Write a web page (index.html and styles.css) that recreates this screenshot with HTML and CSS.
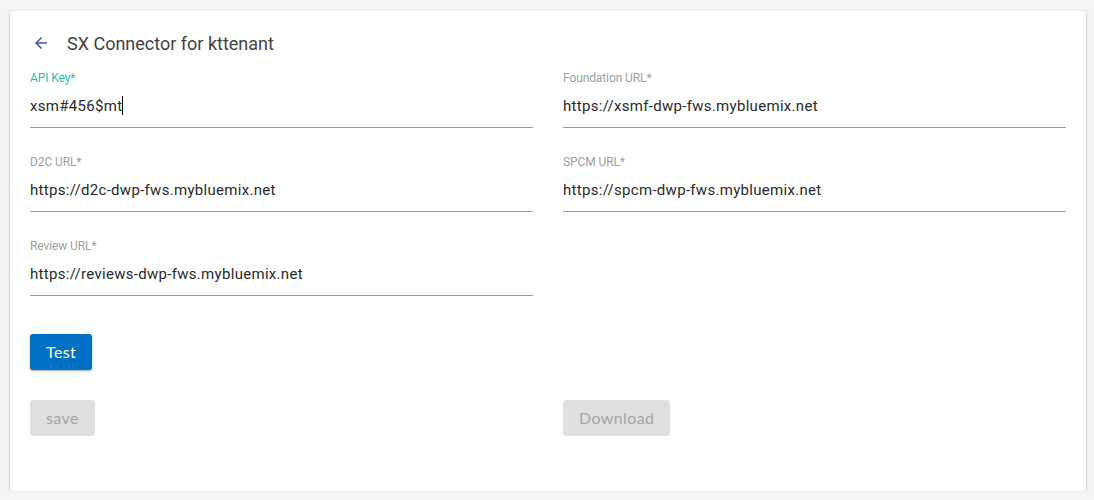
FILE: index.html
```html
<!DOCTYPE html>
<html>
<head>
<meta charset="utf-8">
<link rel="stylesheet" href="styles.css">
</head>
<body>
<div class="card">
  <div class="title-row">
    <svg class="back" width="18" height="18" viewBox="0 0 24 24"><path d="M20 11H7.83l5.59-5.59L12 4l-8 8 8 8 1.41-1.41L7.83 13H20v-2z" fill="#3f51b5"/></svg>
    <span class="title">SX Connector for kttenant</span>
  </div>
  <div class="grid">
    <div class="field">
      <div class="label focused">API Key*</div>
      <div class="input">xsm#456$mt<span class="caret"></span></div>
    </div>
    <div class="field">
      <div class="label">Foundation URL*</div>
      <div class="input">https://xsmf-dwp-fws.mybluemix.net</div>
    </div>
    <div class="field">
      <div class="label">D2C URL*</div>
      <div class="input">https://d2c-dwp-fws.mybluemix.net</div>
    </div>
    <div class="field">
      <div class="label">SPCM URL*</div>
      <div class="input">https://spcm-dwp-fws.mybluemix.net</div>
    </div>
    <div class="field">
      <div class="label">Review URL*</div>
      <div class="input">https://reviews-dwp-fws.mybluemix.net</div>
    </div>
  </div>
  <div class="test-row">
    <button class="btn primary">Test</button>
  </div>
  <div class="grid actions">
    <div><button class="btn disabled save">save</button></div>
    <div><button class="btn disabled">Download</button></div>
  </div>
</div>
</body>
</html>
```
FILE: styles.css
```css
html, body {
  margin: 0;
  padding: 0;
  background: #f5f5f5;
}
body {
  padding: 11px 0 0 10px;
  font-family: Roboto, "Liberation Sans", sans-serif;
}
.card {
  box-sizing: border-box;
  width: 1076px;
  height: 480px;
  background: #fff;
  border-radius: 3px;
  box-shadow: 0 1px 3px rgba(0,0,0,0.25);
  padding: 20px 20px 0 20px;
}
.title-row {
  display: flex;
  align-items: center;
  height: 24px;
}
.back {
  margin-left: 2px;
  margin-right: 17px;
}
.title {
  font-size: 18px;
  color: #424242;
}
.grid {
  display: grid;
  grid-template-columns: 503px 503px;
  column-gap: 30px;
}
.title-row + .grid {
  margin-top: 15px;
}
.field {
  margin-bottom: 26px;
}
.label {
  font-size: 12px;
  line-height: 14px;
  height: 14px;
  padding-top: 1px;
  margin-bottom: -1px;
  color: #a0a0a0;
  letter-spacing: -0.1px;
}
.label.focused {
  color: #1fc2a0;
}
.input {
  box-sizing: border-box;
  height: 44px;
  border-bottom: 1px solid #9a9a9a;
  font-size: 15px;
  color: #2a2a2a;
  line-height: 18px;
  padding-top: 12.5px;
  letter-spacing: 0.3px;
}
.caret {
  display: inline-block;
  width: 1px;
  height: 19px;
  background: #000;
  vertical-align: top;
  margin-top: -1px;
}
.test-row {
  margin-top: 12px;
}
.btn {
  font-family: Lato, "Open Sans", sans-serif;
  font-size: 16px;
  height: 36px;
  border: none;
  border-radius: 3px;
  padding: 0 16px 2px;
  letter-spacing: 0.4px;
}
.primary {
  background: #0071c5;
  color: #fff;
  box-shadow: 0 1px 2px rgba(0,0,0,0.35);
}
.disabled {
  background: #e0e0e0;
  color: #a4a4a4;
}
.actions {
  margin-top: 30px;
}
```
